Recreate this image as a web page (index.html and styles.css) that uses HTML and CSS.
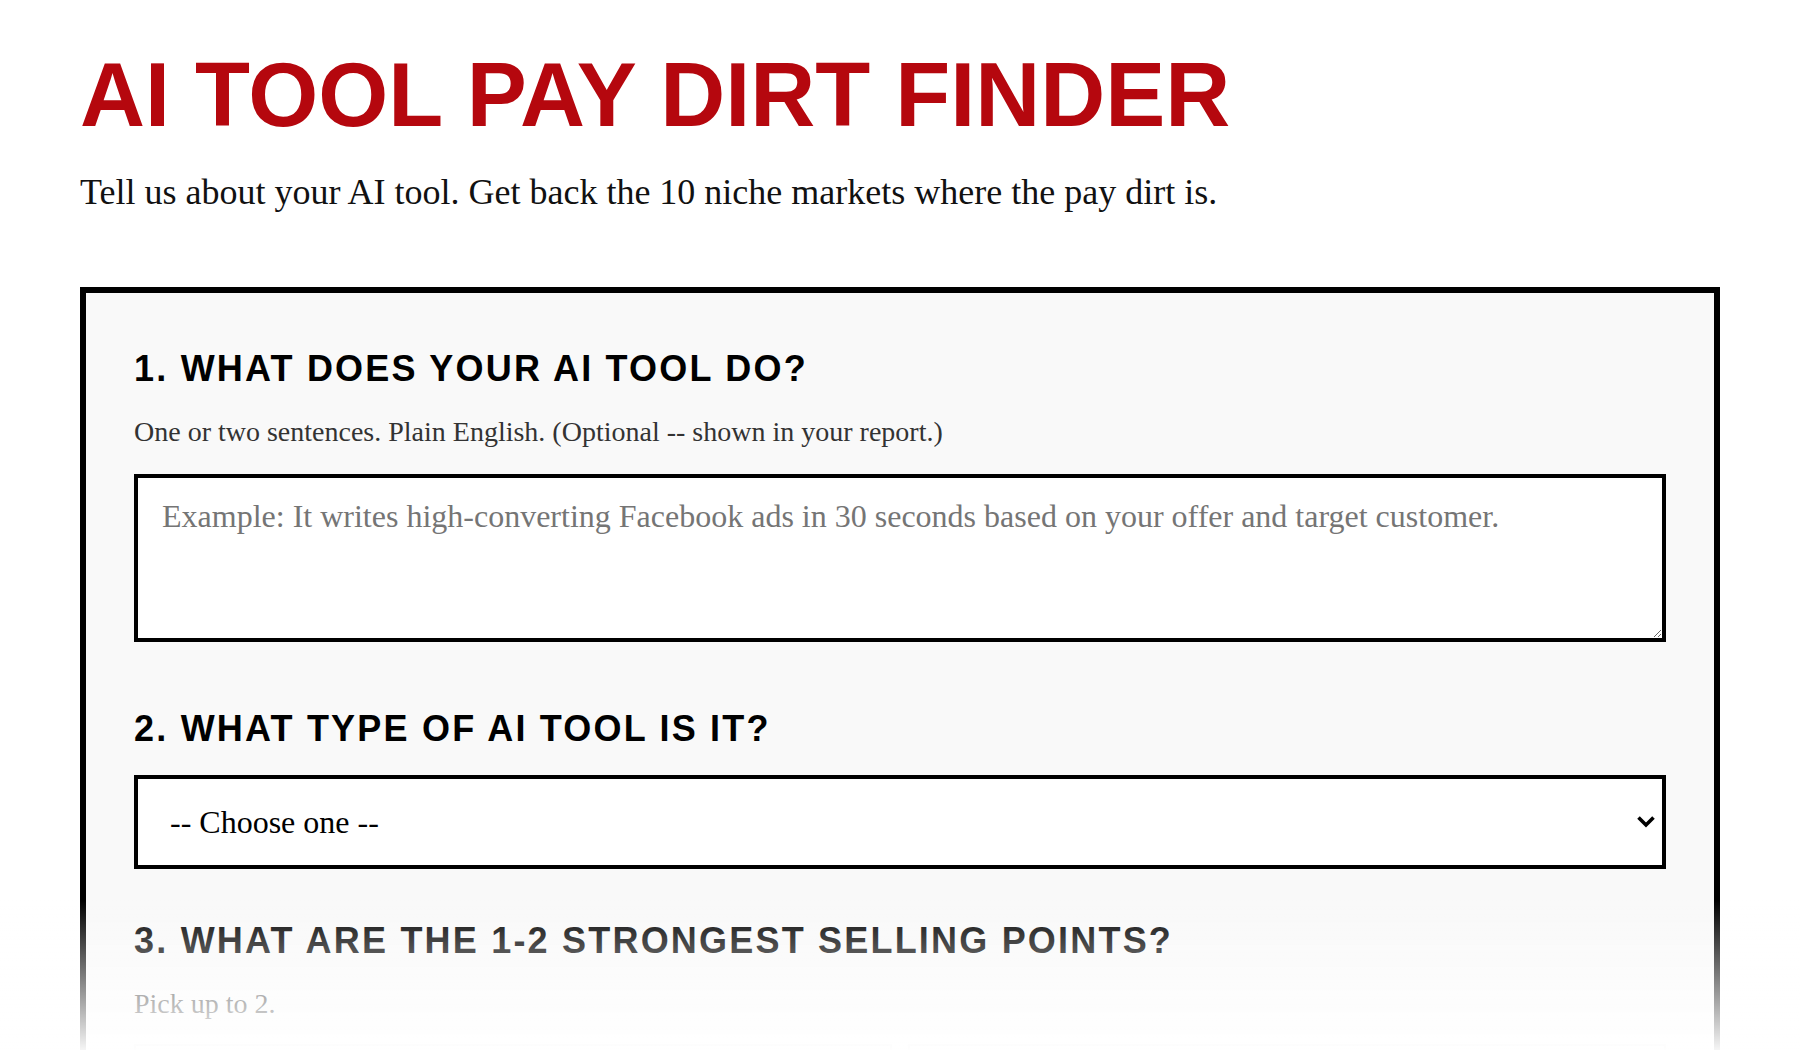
FILE: index.html
```html
<!DOCTYPE html>
<html lang="en">
<head>
<meta charset="utf-8">
<title>AI Tool Pay Dirt Finder</title>
<link rel="stylesheet" href="styles.css">
</head>
<body>
<main class="page">
  <h1 class="title">AI TOOL PAY DIRT FINDER</h1>
  <p class="lead">Tell us about your AI tool. Get back the 10 niche markets where the pay dirt is.</p>

  <form class="panel">
    <section class="field field-text">
      <h2 class="q">1. WHAT DOES YOUR AI TOOL DO?</h2>
      <p class="hint">One or two sentences. Plain English. (Optional -- shown in your report.)</p>
      <textarea class="area" placeholder="Example: It writes high-converting Facebook ads in 30 seconds based on your offer and target customer."></textarea>
    </section>

    <section class="field">
      <h2 class="q">2. WHAT TYPE OF AI TOOL IS IT?</h2>
      <div class="select-wrap">
        <select class="pick">
          <option>-- Choose one --</option>
          <option>Content writing</option>
          <option>Image generation</option>
          <option>Video creation</option>
          <option>Chatbot / assistant</option>
          <option>Automation</option>
        </select>
        <svg class="chev" width="20" height="14" viewBox="0 0 20 14" aria-hidden="true">
          <polyline points="2.5,2.5 10,10 17.5,2.5" fill="none" stroke="#000" stroke-width="3.6" stroke-linecap="butt" stroke-linejoin="miter"/>
        </svg>
      </div>
    </section>

    <section class="field">
      <h2 class="q">3. WHAT ARE THE 1-2 STRONGEST SELLING POINTS?</h2>
      <p class="hint hint-b">Pick up to 2.</p>
      <div class="cards">
        <label class="card"><input type="checkbox"> Saves time</label>
        <label class="card"><input type="checkbox"> Saves money</label>
        <label class="card"><input type="checkbox"> Makes more money</label>
        <label class="card"><input type="checkbox"> Easy to use</label>
      </div>
    </section>
  </form>
</main>
<div class="fade" aria-hidden="true"></div>
</body>
</html>
```
FILE: styles.css
```css
html, body {
  margin: 0;
  padding: 0;
  background: #ffffff;
}

body {
  font-family: "Liberation Serif", "Times New Roman", serif;
  color: #111111;
}

.page {
  padding: 46px 80px 80px;
}

.title {
  margin: 0;
  font-family: "Liberation Sans", Arial, sans-serif;
  font-weight: 700;
  font-size: 90px;
  line-height: 1.1;
  color: #b5070e;
}

.lead {
  margin: 24px 0 71px;
  font-size: 36px;
  line-height: 1.3;
  color: #111111;
}

.panel {
  border: 6px solid #000000;
  background: #f9f9f9;
  padding: 54px 48px 60px;
}

.field {
  margin: 0 0 50px;
}

.field-text {
  margin-bottom: 65px;
}

.q {
  margin: 0 0 24px;
  font-family: "Liberation Sans", Arial, sans-serif;
  font-weight: 700;
  font-size: 36px;
  line-height: 1.2;
  letter-spacing: 2.2px;
  color: #000000;
}

.hint {
  margin: 2px 0 24px;
  font-size: 28px;
  line-height: 1.3;
  color: #333333;
}

.hint-b {
  margin-top: 3px;
  margin-bottom: 22px;
}

.area {
  display: block;
  box-sizing: border-box;
  width: 100%;
  height: 168px;
  margin: 0;
  padding: 20px 24px;
  border: 4px solid #000000;
  border-radius: 0;
  background: #ffffff;
  font-family: "Liberation Serif", "Times New Roman", serif;
  font-size: 32px;
  line-height: 1.15;
  color: #111111;
  resize: vertical;
  outline: none;
}

.area::placeholder {
  color: #757575;
}

.select-wrap {
  position: relative;
}

.pick {
  display: block;
  box-sizing: border-box;
  width: 100%;
  height: 94px;
  margin: 0;
  padding: 0 50px 0 32px;
  border: 4px solid #000000;
  border-radius: 0;
  background-color: #ffffff;
  font-family: "Liberation Serif", "Times New Roman", serif;
  font-size: 32px;
  color: #000000;
  outline: none;
  appearance: none;
  -webkit-appearance: none;
}

.chev {
  position: absolute;
  right: 10px;
  top: 50%;
  margin-top: -7px;
  pointer-events: none;
}

.cards {
  display: grid;
  grid-template-columns: 1fr 1fr;
  gap: 16px;
}

.card {
  display: flex;
  align-items: center;
  gap: 16px;
  height: 80px;
  box-sizing: border-box;
  padding: 0 24px;
  border: 2px solid #dddddd;
  background: #ffffff;
  font-size: 28px;
  color: #222222;
}

.card input {
  width: 24px;
  height: 24px;
  margin: 0;
}

.fade {
  position: fixed;
  left: 0;
  right: 0;
  bottom: 0;
  height: 150px;
  background: linear-gradient(to bottom, rgba(255, 255, 255, 0) 0%, rgba(255, 255, 255, 0.96) 100%);
  pointer-events: none;
}
```
